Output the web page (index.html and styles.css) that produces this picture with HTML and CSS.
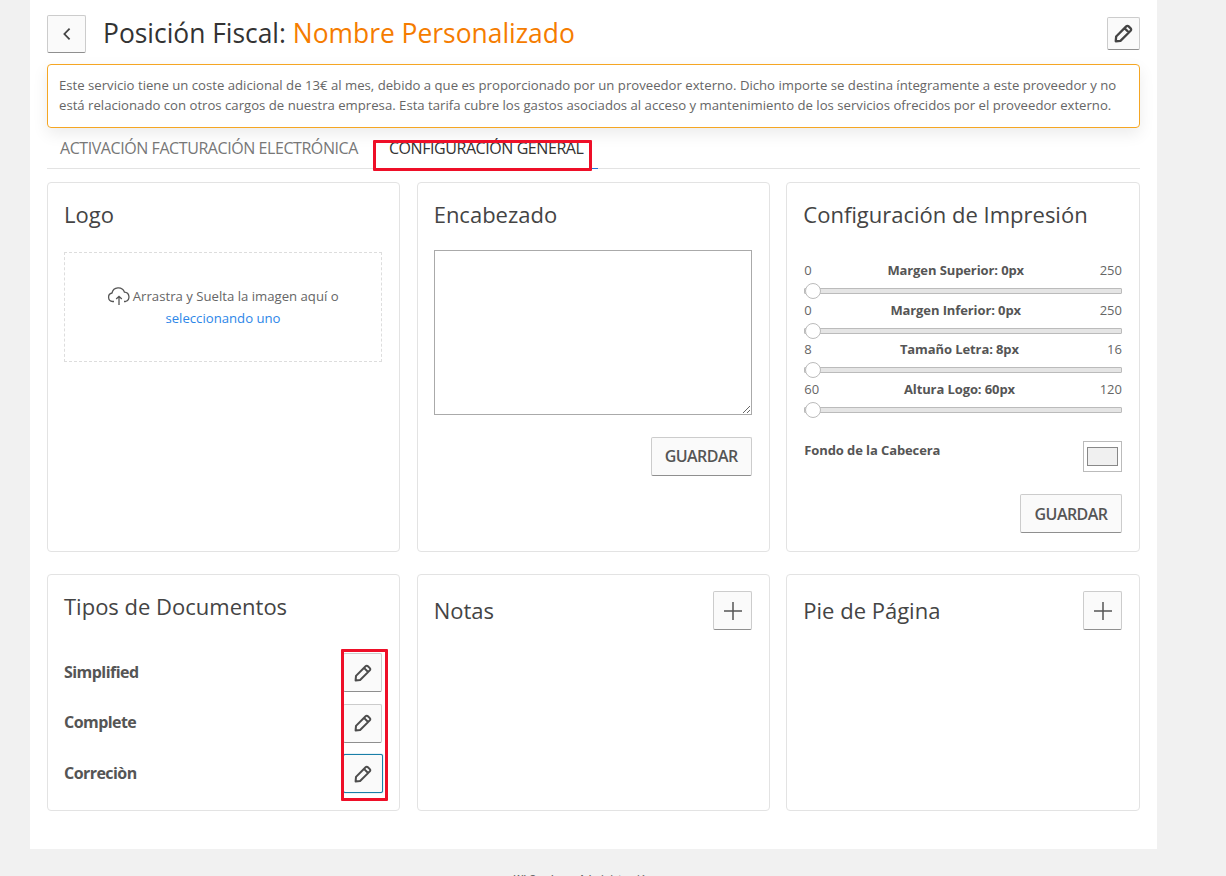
FILE: index.html
```html
<!DOCTYPE html>
<html lang="es">
<head>
<meta charset="utf-8">
<title>Posición Fiscal</title>
<link rel="stylesheet" href="styles.css">
</head>
<body>
<svg class="defs" width="0" height="0" aria-hidden="true">
  <symbol id="pencil" viewBox="0 0 20 20">
    <path d="M2.6 17.4 3 12.9 12.6 3.2a1.6 1.6 0 0 1 2.3 0l1.9 1.9a1.6 1.6 0 0 1 0 2.3L7.1 17 2.6 17.4Z M11 4.900 15.100 9" fill="none" stroke="currentColor" stroke-linejoin="round"/>
  </symbol>
</svg>
<main class="page">
  <header class="head">
    <button class="btn btn-back" type="button" aria-label="Volver">
      <svg width="10" height="14" viewBox="0 0 10 14"><path d="M7.6 1.6 2.4 7l5.2 5.4" fill="none" stroke="currentColor" stroke-width="1.8"/></svg>
    </button>
    <h1 class="title">Posición Fiscal: <span class="accent">Nombre Personalizado</span></h1>
    <button class="btn btn-icon btn-edit-top" type="button" aria-label="Editar"><svg class="pen pen-top" width="21" height="21"><use href="#pencil"/></svg></button>
  </header>

  <div class="notice">Este servicio tiene un coste adicional de 13€ al mes, debido a que es proporcionado por un proveedor externo. Dicho importe se destina íntegramente a este proveedor y no está relacionado con otros cargos de nuestra empresa. Esta tarifa cubre los gastos asociados al acceso y mantenimiento de los servicios ofrecidos por el proveedor externo.</div>

  <nav class="tabs">
    <a class="tab">ACTIVACIÓN FACTURACIÓN ELECTRÓNICA</a>
    <a class="tab tab-active">CONFIGURACIÓN GENERAL<span class="mark mark-tab"></span></a>
  </nav>

  <div class="grid">
    <section class="card">
      <h2 class="card-title">Logo</h2>
      <div class="drop">
        <p class="drop-line">
          <svg class="cloud" width="24" height="20" viewBox="0 0 24 20"><path d="M7 15.500H5.600A4.300 4.300 0 0 1 5 7a6.500 6.500 0 0 1 12.400-.9A4.800 4.800 0 0 1 18.500 15.500H17 M12 19V10.500 M9.200 13 12 10.300 14.800 13" fill="none" stroke="currentColor" stroke-width="1.300"/></svg>
          Arrastra y Suelta la imagen aquí o
        </p>
        <a class="drop-link">seleccionando uno</a>
      </div>
    </section>

    <section class="card">
      <h2 class="card-title">Encabezado</h2>
      <textarea class="area" aria-label="Encabezado"></textarea>
      <div class="actions"><button class="btn btn-text" type="button">GUARDAR</button></div>
    </section>

    <section class="card card-last">
      <h2 class="card-title">Configuración de Impresión</h2>
      <div class="sliders">
        <div class="slider">
          <div class="slider-labels"><span>0</span><b>Margen Superior: 0px</b><span>250</span></div>
          <div class="track"><i class="thumb"></i></div>
        </div>
        <div class="slider">
          <div class="slider-labels"><span>0</span><b>Margen Inferior: 0px</b><span>250</span></div>
          <div class="track"><i class="thumb"></i></div>
        </div>
        <div class="slider">
          <div class="slider-labels"><span>8</span><b>Tamaño Letra: 8px</b><span>16</span></div>
          <div class="track"><i class="thumb"></i></div>
        </div>
        <div class="slider">
          <div class="slider-labels"><span>60</span><b>Altura Logo: 60px</b><span>120</span></div>
          <div class="track"><i class="thumb"></i></div>
        </div>
      </div>
      <div class="color-row">
        <b class="color-label">Fondo de la Cabecera</b>
        <span class="swatch"><i class="swatch-fill"></i></span>
      </div>
      <div class="actions"><button class="btn btn-text btn-text-wide" type="button">GUARDAR</button></div>
    </section>

    <section class="card">
      <h2 class="card-title">Tipos de Documentos</h2>
      <div class="docs">
        <span class="mark mark-docs"></span>
        <div class="doc"><b>Simplified</b><button class="btn btn-icon" type="button" aria-label="Editar"><svg class="pen" width="20" height="20"><use href="#pencil"/></svg></button></div>
        <div class="doc"><b>Complete</b><button class="btn btn-icon" type="button" aria-label="Editar"><svg class="pen" width="20" height="20"><use href="#pencil"/></svg></button></div>
        <div class="doc"><b>Correciòn</b><button class="btn btn-icon btn-focus" type="button" aria-label="Editar"><svg class="pen" width="20" height="20"><use href="#pencil"/></svg></button></div>
      </div>
    </section>

    <section class="card">
      <div class="card-head">
        <h2 class="card-title card-title-head">Notas</h2>
        <button class="btn btn-icon" type="button" aria-label="Añadir"><svg class="plus" width="20" height="20" viewBox="0 0 20 20"><path d="M10 1v18M1 10h18" stroke="currentColor" stroke-width="1.500"/></svg></button>
      </div>
    </section>

    <section class="card card-last">
      <div class="card-head">
        <h2 class="card-title card-title-head">Pie de Página</h2>
        <button class="btn btn-icon" type="button" aria-label="Añadir"><svg class="plus" width="20" height="20" viewBox="0 0 20 20"><path d="M10 1v18M1 10h18" stroke="currentColor" stroke-width="1.500"/></svg></button>
      </div>
    </section>
  </div>
</main>
<footer class="foot">WI Cuaderno Administración</footer>
</body>
</html>
```
FILE: styles.css
```css
* { box-sizing: border-box; }
html, body { height: 876px; overflow: hidden; }
body {
  margin: 0;
  background: #f1f1f1;
  color: #555;
  font-family: "Open Sans", "Noto Sans", sans-serif;
  font-size: 13px;
}
.defs { position: absolute; }
.page {
  width: 1127px;
  height: 849px;
  margin-left: 30px;
  padding: 17px 17px 0;
  background: #fff;
}
.head { display: flex; align-items: center; height: 34px; }
.btn {
  background: #fafafa;
  border: 1px solid #ccc;
  border-bottom-color: #8f8f8f;
  border-radius: 2px;
  color: #555;
  padding: 0;
  font-family: inherit;
  display: flex;
  align-items: center;
  justify-content: center;
}
.btn-back { width: 39px; height: 38px; flex: none; color: #444; }
.title {
  margin: -2px 0 0 17px;
  flex: 1;
  font-size: 26.4px;
  font-weight: 400;
  color: #333;
  line-height: 34px;
}
.accent { color: #f57c00; }
.btn-icon { width: 39px; height: 39px; flex: none; }
.btn-edit-top { width: 33px; height: 33px; align-self: flex-start; }
.pen { stroke-width: 2; color: #4d4d4d; }
.pen-top { stroke-width: 2.2; color: #444; }
.plus { margin-left: 2px; }
.notice {
  margin-top: 13px;
  height: 64px;
  padding: 10px 11px;
  border: 1px solid #f5a623;
  border-radius: 4px;
  font-size: 13.16px;
  line-height: 20px;
  color: #666;
  box-shadow: 0 6px 16px rgba(0,0,0,.08);
}
.tabs {
  display: flex;
  height: 41px;
  border-bottom: 1px solid #e3e3e3;
}
.tab {
  position: relative;
  padding: 9px 13px 0;
  margin-right: 5px;
  font-size: 16px;
  letter-spacing: -0.43px;
  color: #777;
  white-space: nowrap;
  line-height: 22px;
}
.tab-active { color: #333; border-bottom: 1px solid #1e73d8; height: 41px; padding-right: 15px; }
.mark { position: absolute; border: 3px solid #ee0f28; border-radius: 1px; pointer-events: none; }
.mark-tab { left: -3px; top: 12px; width: 219px; height: 31px; }
.grid {
  display: grid;
  grid-template-columns: 353px 353px 353.67px;
  grid-template-rows: 370px 237px;
  column-gap: 16.67px;
  row-gap: 22px;
  margin-top: 13px;
}
.card {
  border: 1px solid #e3e3e3;
  border-radius: 4px;
  padding: 16px 17px 16px 16px;
  min-width: 0;
}
.card-last { padding-left: 17px; }
.card-title {
  margin: 0;
  font-size: 22px;
  line-height: 30px;
  font-weight: 400;
  color: #444;
}
.card-last .card-title { margin-left: -1px; }
.card-head { display: flex; justify-content: space-between; align-items: center; }
.card-title-head { margin-bottom: 2px; }
.drop {
  margin-top: 23px;
  height: 110px;
  border: 1px dashed #ddd;
  text-align: center;
  padding-top: 32px;
  font-size: 13.16px;
  line-height: 22px;
  color: #666;
}
.drop-line { margin: 0; }
.cloud { vertical-align: -5px; color: #555; margin-right: -2px; }
.drop-link { color: #2c86e8; }
.area {
  display: block;
  width: 318px;
  height: 165px;
  margin-top: 21px;
  border: 1px solid #aaa;
  border-radius: 0;
  background: #fff;
}
.actions { display: flex; justify-content: flex-end; margin-top: 22px; }
.btn-text {
  width: 101px;
  height: 39px;
  padding-bottom: 2px;
  font-size: 16px;
  letter-spacing: -0.55px;
  font-weight: 600;
  color: #555;
}
.btn-text-wide { width: 102px; padding-bottom: 0; }
.sliders { margin-top: 31px; }
.slider { height: 39.5px; }
.slider-labels {
  display: flex;
  justify-content: space-between;
  font-size: 13px;
  line-height: 20px;
  color: #666;
}
.slider-labels b { color: #555; font-weight: 700; letter-spacing: -0.1px; }
.track {
  position: relative;
  height: 6px;
  margin-top: 8px;
  background: #e5e5e5;
  border: 1px solid #bbb;
  border-radius: 1px;
}
.thumb {
  position: absolute;
  left: 0;
  top: -6px;
  width: 16px;
  height: 16px;
  border-radius: 50%;
  background: #fff;
  border: 1px solid #bbb;
}
.color-row {
  display: flex;
  justify-content: space-between;
  align-items: flex-start;
  margin-top: 23px;
}
.color-label { font-size: 13px; line-height: 18px; color: #555; letter-spacing: -0.1px; }
.swatch {
  width: 39px;
  height: 31px;
  border: 1px solid #bbb;
  padding: 5px 3px;
  display: block;
}
.swatch-fill { display: block; height: 100%; background: #f0f0f0; border: 1px solid #888; }
.docs { position: relative; margin-top: 32px; }
.doc {
  display: flex;
  justify-content: space-between;
  align-items: center;
  height: 39px;
  margin-bottom: 11.5px;
  font-size: 16px;
  color: #555;
}
.doc b { font-weight: 700; letter-spacing: -0.55px; padding-bottom: 2px; }
.btn-focus { border-color: #1a7fa8; box-shadow: 0 0 1px #1a7fa8; width: 40px; margin-right: -1px; }
.mark-docs { left: 277px; top: -4px; width: 47px; height: 152px; z-index: 2; }
.foot {
  margin-top: 23px;
  padding-right: 60px;
  text-align: center;
  font-size: 10px;
  color: #666;
  font-weight: 600;
  line-height: 14px;
}
```
